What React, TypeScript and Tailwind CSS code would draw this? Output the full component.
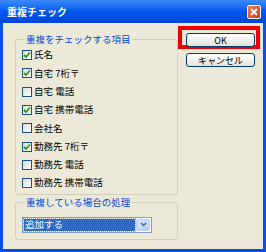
import { useState } from 'react';

// rows shown in the first group box
const items = [
  { label: '氏名', checked: true },
  { label: '自宅 7桁〒', checked: true },
  { label: '自宅 電話', checked: false },
  { label: '自宅 携帯電話', checked: true },
  { label: '会社名', checked: false },
  { label: '勤務先 7桁〒', checked: true },
  { label: '勤務先 電話', checked: false },
  { label: '勤務先 携帯電話', checked: false },
];

const CheckBox = ({ checked }: { checked: boolean }) => (
  <span className="w-[10px] h-[10px] border border-[#1C5180] bg-gradient-to-br from-[#DCDCD7] to-white flex items-center justify-center shrink-0">
    {checked && (
      <svg width="8" height="8" viewBox="0 0 8 8">
        <path d="M1 4 L3 6 L7 1.5" fill="none" stroke="#21A121" strokeWidth="1.8" />
      </svg>
    )}
  </span>
);

const XpButton = ({ label }: { label: string }) => (
  <button className="w-[69px] h-[14px] rounded-[3px] border border-[#003C74] bg-gradient-to-b from-white to-[#E3E3DB] text-[9px] leading-none text-black flex items-center justify-center">
    {label}
  </button>
);

const App = () => {
  const [rows, setRows] = useState(items);

  return (
    <div
      className="w-[266px] h-[252px] flex flex-col bg-[#0A4FDF] overflow-hidden"
      style={{ fontFamily: '"Noto Sans CJK JP", "Liberation Sans", sans-serif' }}
    >
      {/* title bar */}
      <div className="h-[23px] flex items-center justify-between pl-[7px] pr-[5px] bg-gradient-to-b from-[#3D8AF7] via-[#0058EE] to-[#0047D6]">
        <span className="text-white font-bold text-[10px] leading-none">重複チェック</span>
        <span className="w-[14px] h-[14px] rounded-[2px] border border-white bg-gradient-to-br from-[#E9805F] to-[#C93A15] flex items-center justify-center">
          <svg width="8" height="8" viewBox="0 0 8 8">
            <path d="M1 1 L7 7 M7 1 L1 7" stroke="white" strokeWidth="1.8" />
          </svg>
        </span>
      </div>

      <div className="flex-1 mx-[3px] mb-[3px] bg-[#ECE9D8] flex items-start">
        {/* left column */}
        <div className="ml-[12px] mt-[10px] w-[163px] flex flex-col gap-[1.5px]">
          <fieldset className="border border-[#D0D0BF] rounded-[3px] pl-[6px] pb-[1.5px]">
            <legend className="ml-[3px] px-[1px] text-[9.5px] leading-[13px] text-[#0046D5]">重複をチェックする項目</legend>
            {rows.map((r, i) => (
              <div
                key={r.label}
                className="h-[18.3px] flex items-center gap-[2px] text-[9.5px] leading-none text-black cursor-default"
                onClick={() => setRows(rows.map((x, j) => (j === i ? { ...x, checked: !x.checked } : x)))}
              >
                <CheckBox checked={r.checked} />
                <span>{r.label}</span>
              </div>
            ))}
          </fieldset>

          <fieldset className="border border-[#D0D0BF] rounded-[3px] pl-[6px] pt-[7.5px] pb-[6px]">
            <legend className="ml-[3px] px-[1px] text-[9.5px] leading-[13px] text-[#0046D5]">重複している場合の処理</legend>
            <div className="w-[130px] h-[16px] border border-[#7F9DB9] bg-white flex items-stretch">
              <div className="flex-1 m-[1px] bg-[#316AC5] outline outline-1 outline-dotted outline-[#C9A14A] flex items-center pl-[1px]">
                <span className="text-white text-[9.5px] leading-none">追加する</span>
              </div>
              <div className="w-[14px] my-[1px] mr-[1px] rounded-[2px] bg-gradient-to-br from-[#DCE6FD] to-[#B6CAF6] border border-[#B9CDF8] flex items-center justify-center">
                <svg width="7" height="5" viewBox="0 0 7 5">
                  <path d="M1 1 L3.5 3.5 L6 1" fill="none" stroke="#4D6185" strokeWidth="1.5" />
                </svg>
              </div>
            </div>
          </fieldset>
        </div>

        {/* right column: buttons */}
        <div className="mt-[3px] w-[82px] flex flex-col">
          <div className="h-[23px] border-4 border-[#F00000] pl-[4px] pt-[3px]">
            <XpButton label="OK" />
          </div>
          <div className="pl-[8px] mt-[4px]">
            <XpButton label="キャンセル" />
          </div>
        </div>
      </div>
    </div>
  );
};

export default App;
